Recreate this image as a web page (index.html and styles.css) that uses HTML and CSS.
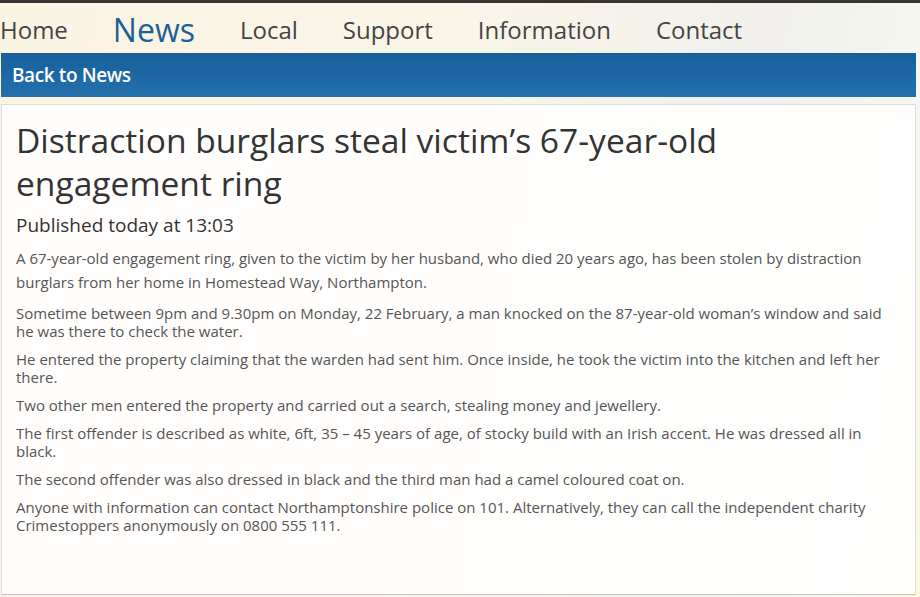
FILE: index.html
```html
<!DOCTYPE html>
<html>
<head>
  <title>Distraction burglars steal victim's 67-year-old engagement ring</title>
  <link rel="stylesheet" href="styles.css">
</head>
<body>
  <div class="topline"></div>
  <nav class="menu">
    <a href="#">Home</a>
    <a href="#" class="current">News</a>
    <a href="#">Local</a>
    <a href="#">Support</a>
    <a href="#">Information</a>
    <a href="#">Contact</a>
  </nav>

  <div class="backbar">
    <a href="#">Back to News</a>
  </div>

  <div class="article">
    <h1>Distraction burglars steal victim’s 67-year-old engagement ring</h1>
    <h2>Published today at 13:03</h2>

    <p class="lead">A 67-year-old engagement ring, given to the victim by her husband, who died 20 years ago, has been stolen by distraction burglars from her home in Homestead Way, Northampton.</p>
    <p>Sometime between 9pm and 9.30pm on Monday, 22 February, a man knocked on the 87-year-old woman’s window and said he was there to check the water.</p>
    <p>He entered the property claiming that the warden had sent him. Once inside, he took the victim into the kitchen and left her there.</p>
    <p>Two other men entered the property and carried out a search, stealing money and jewellery.</p>
    <p>The first offender is described as white, 6ft, 35 – 45 years of age, of stocky build with an Irish accent. He was dressed all in black.</p>
    <p>The second offender was also dressed in black and the third man had a camel coloured coat on.</p>
    <p>Anyone with information can contact Northamptonshire police on 101. Alternatively, they can call the independent charity Crimestoppers anonymously on 0800 555 111.</p>
  </div>
</body>
</html>
```

FILE: styles.css
```css
html, body {
  height: 100%;
}
body {
  margin: 0;
  font-family: "Open Sans", Arial, sans-serif;
  color: #444;
  background: linear-gradient(100deg, #fbf4e3 0%, #fbf5e8 45%, #f1f0ec 75%, #f6f7f0 92%, #fbf8dc 100%);
  overflow: hidden;
}
.topline {
  height: 3px;
  background: #3a3530;
}
.menu {
  display: flex;
  align-items: flex-start;
  gap: 45px;
  height: 47px;
  padding-top: 3px;
}
.menu a {
  font-size: 24px;
  line-height: 47px;
  color: #444;
  text-decoration: none;
}
.menu a.current {
  font-size: 32px;
  color: #1d5f98;
}
.backbar {
  margin: 0 4px 0 1px;
  height: 44px;
  display: flex;
  align-items: center;
  padding-left: 11px;
  background: linear-gradient(to bottom, #17609b, #2370ad);
}
.backbar a {
  color: #fff;
  font-size: 19px;
  font-weight: 600;
  letter-spacing: -0.4px;
  text-decoration: none;
}
.article {
  box-sizing: border-box;
  margin: 7px 4px 0 1px;
  height: 491px;
  padding: 14px 15px 0 14px;
  background: rgba(255, 255, 255, 0.88);
  border: 1px solid #dcdcd8;
  border-bottom-color: #c4c4c4;
}
h1 {
  margin: 0;
  font-size: 33.6px;
  font-weight: normal;
  line-height: 43px;
  color: #333;
  max-width: 760px;
}
h2 {
  margin: 7px 0 8px;
  font-size: 19px;
  font-weight: normal;
  line-height: 26px;
  color: #333;
}
p {
  margin: 0 0 10px;
  font-size: 15px;
  line-height: 18px;
  color: #555;
  max-width: 870px;
}
p.lead {
  line-height: 24px;
  margin-bottom: 10px;
}
```
